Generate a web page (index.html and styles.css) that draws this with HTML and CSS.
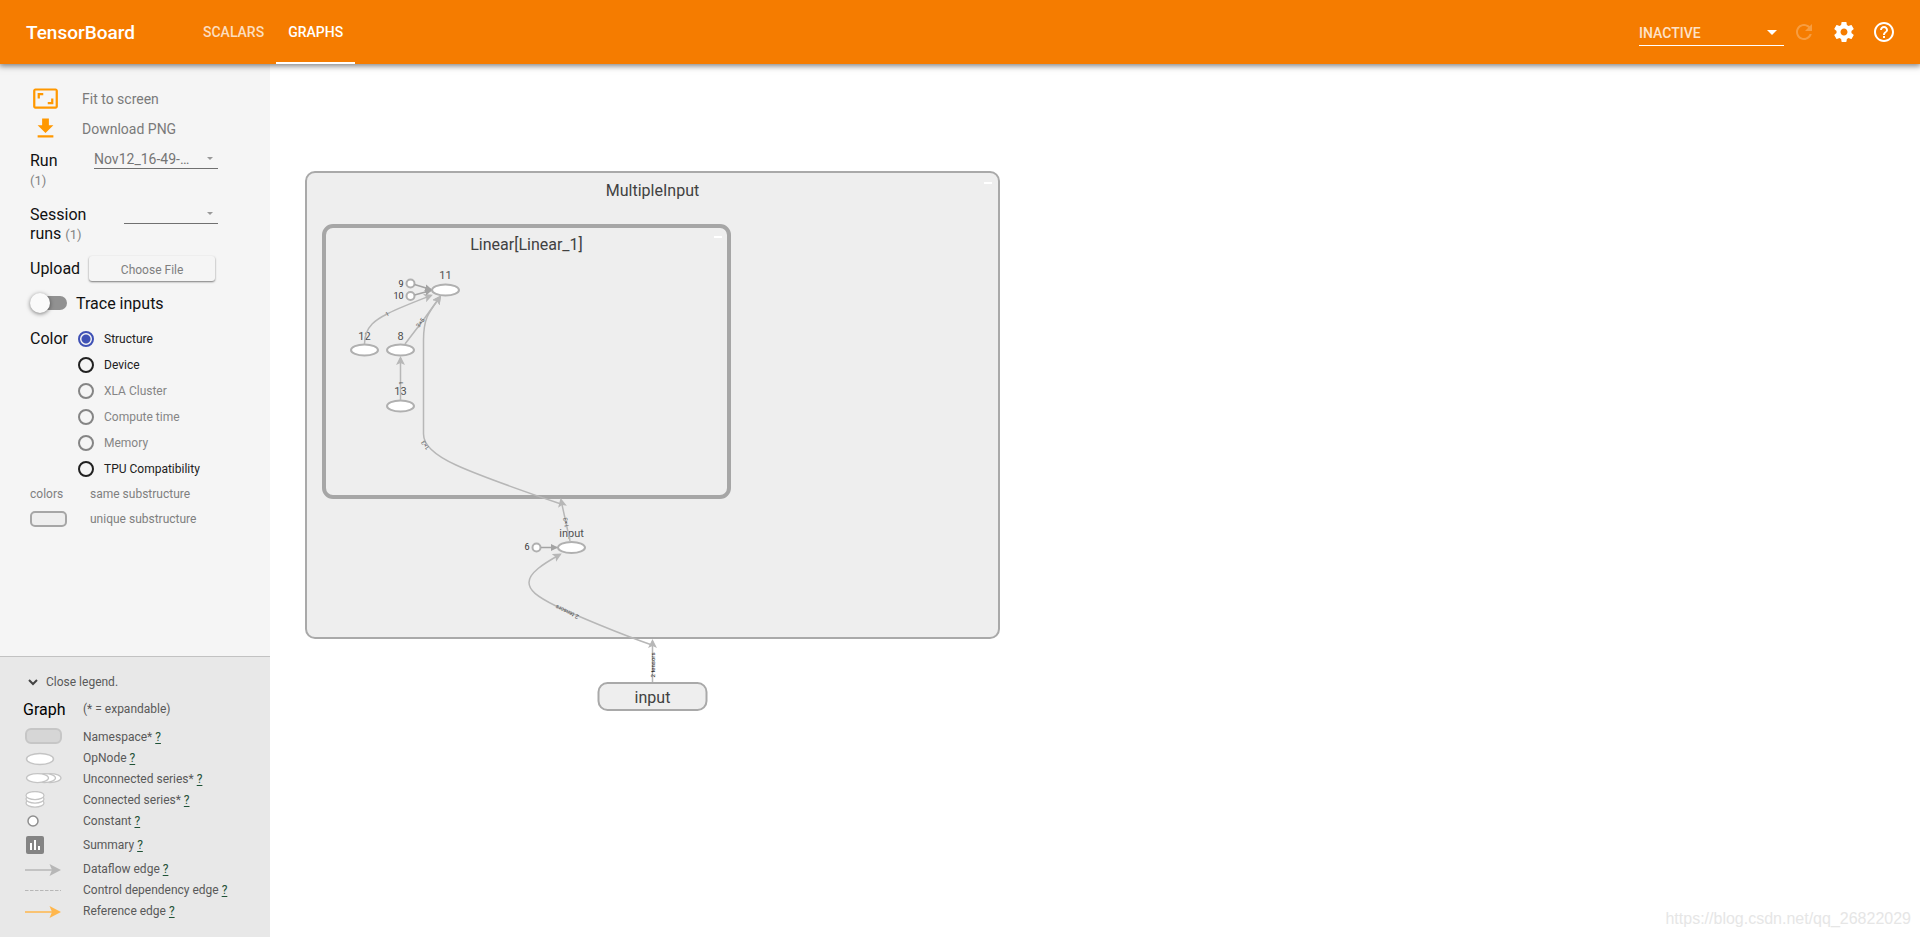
FILE: index.html
```html
<!DOCTYPE html>
<html lang="en">
<head>
<meta charset="utf-8">
<title>TensorBoard</title>
<link rel="stylesheet" href="styles.css">
</head>
<body>
<header class="toolbar">
  <div class="brand">TensorBoard</div>
  <nav class="tabs">
    <button class="tab" type="button">SCALARS</button>
    <button class="tab tab-active" type="button">GRAPHS</button>
  </nav>
  <div class="tools">
    <div class="picker picker-light">
      <select class="picker-select" aria-label="Plugin"><option>INACTIVE</option></select>
      <svg class="caret" viewBox="0 0 10 5" aria-hidden="true"><path d="M0 0h10L5 5z"/></svg>
    </div>
    <button class="icon-button icon-disabled" type="button" aria-label="Reload" disabled>
      <svg viewBox="0 0 24 24"><path d="M17.65 6.35C16.2 4.9 14.21 4 12 4c-4.42 0-7.99 3.58-7.99 8s3.57 8 7.99 8c3.73 0 6.84-2.55 7.73-6h-2.08c-.82 2.33-3.04 4-5.65 4-3.31 0-6-2.69-6-6s2.69-6 6-6c1.66 0 3.14.69 4.22 1.78L13 11h7V4l-2.35 2.35z"/></svg>
    </button>
    <button class="icon-button" type="button" aria-label="Settings">
      <svg viewBox="0 0 24 24"><path d="M19.43 12.98c.04-.32.07-.64.07-.98s-.03-.66-.07-.98l2.11-1.65c.19-.15.24-.42.12-.64l-2-3.46c-.12-.22-.39-.3-.61-.22l-2.49 1c-.52-.4-1.08-.73-1.69-.98l-.38-2.65C14.46 2.18 14.25 2 14 2h-4c-.25 0-.46.18-.49.42l-.38 2.65c-.61.25-1.17.59-1.69.98l-2.49-1c-.23-.09-.49 0-.61.22l-2 3.46c-.13.22-.07.49.12.64l2.11 1.65c-.04.32-.07.65-.07.98s.03.66.07.98l-2.11 1.65c-.19.15-.24.42-.12.64l2 3.46c.12.22.39.3.61.22l2.49-1c.52.4 1.08.73 1.69.98l.38 2.65c.03.24.24.42.49.42h4c.25 0 .46-.18.49-.42l.38-2.65c.61-.25 1.17-.59 1.69-.98l2.49 1c.23.09.49 0 .61-.22l2-3.46c.12-.22.07-.49-.12-.64l-2.11-1.65zM12 15.5c-1.93 0-3.5-1.57-3.5-3.5s1.57-3.5 3.5-3.5 3.5 1.57 3.5 3.5-1.57 3.5-3.5 3.5z"/></svg>
    </button>
    <button class="icon-button" type="button" aria-label="Help">
      <svg viewBox="0 0 24 24"><path d="M11 18h2v-2h-2v2zm1-16C6.48 2 2 6.48 2 12s4.48 10 10 10 10-4.48 10-10S17.52 2 12 2zm0 18c-4.41 0-8-3.59-8-8s3.59-8 8-8 8 3.59 8 8-3.59 8-8 8zm0-14c-2.21 0-4 1.79-4 4h2c0-1.100.9-2 2-2s2 .9 2 2c0 2-3 1.750-3 5h2c0-2.250 3-2.500 3-5 0-2.210-1.790-4-4-4z"/></svg>
    </button>
  </div>
</header>

<div class="workspace">
  <aside class="sidebar">
    <section class="controls">
      <button class="action" type="button">
        <svg class="action-icon" viewBox="0 0 24 24"><path d="M19 12h-2v3h-3v2h5v-5zM7 9h3V7H5v5h2V9zm14-6H3c-1.100 0-2 .9-2 2v14c0 1.100.9 2 2 2h18c1.100 0 2-.9 2-2V5c0-1.100-.9-2-2-2zm0 16.010H3V4.990h18v14.020z"/></svg>
        <span>Fit to screen</span>
      </button>
      <button class="action" type="button">
        <svg class="action-icon" viewBox="0 0 24 24"><path d="M19 9h-4V3H9v6H5l7 7 7-7zM5 18v2h14v-2H5z"/></svg>
        <span>Download PNG</span>
      </button>

      <div class="field field-run">
        <label class="field-label" for="run">Run <span class="count">(1)</span></label>
        <div class="picker picker-run">
          <select class="picker-select" id="run"><option>Nov12_16-49-…</option></select>
          <svg class="caret" viewBox="0 0 10 5" aria-hidden="true"><path d="M0 0h10L5 5z"/></svg>
        </div>
      </div>
      <div class="field field-session">
        <label class="field-label" for="session"><span class="line">Session</span><span class="line">runs <span class="count">(1)</span></span></label>
        <div class="picker picker-session">
          <select class="picker-select" id="session"><option></option></select>
          <svg class="caret" viewBox="0 0 10 5" aria-hidden="true"><path d="M0 0h10L5 5z"/></svg>
        </div>
      </div>
      <div class="upload">
        <span class="upload-label" id="upload-label">Upload</span>
        <button class="file-button" type="button">Choose File</button>
      </div>
      <label class="trace"><input class="switch" type="checkbox"><span>Trace inputs</span></label>

      <div class="color">
        <span class="color-label" id="color-label">Color</span>
        <div class="radios" role="radiogroup" aria-labelledby="color-label">
          <label class="radio"><input type="radio" name="color" checked><span>Structure</span></label>
          <label class="radio"><input type="radio" name="color"><span>Device</span></label>
          <label class="radio radio-off"><input type="radio" name="color" disabled><span>XLA Cluster</span></label>
          <label class="radio radio-off"><input type="radio" name="color" disabled><span>Compute time</span></label>
          <label class="radio radio-off"><input type="radio" name="color" disabled><span>Memory</span></label>
          <label class="radio"><input type="radio" name="color"><span>TPU Compatibility</span></label>
        </div>
      </div>
      <div class="swatches">
        <span>colors</span><span>same substructure</span>
        <span class="swatch"></span><span>unique substructure</span>
      </div>
    </section>

    <section class="legend">
      <button class="legend-toggle" type="button">
        <svg viewBox="0 0 10 7" aria-hidden="true"><path d="M1 1l4 4 4-4" fill="none" stroke="#444" stroke-width="2"/></svg>
        <span>Close legend.</span>
      </button>
      <div class="legend-head"><span class="legend-title">Graph</span><span>(* = expandable)</span></div>
      <ul class="legend-list">
        <li><svg viewBox="0 0 40 18"><rect x="3" y="1" width="35" height="14" rx="5" fill="#d6d6d6" stroke="#c6c6c6" stroke-width="2"/></svg><span>Namespace* <a href="#namespace">?</a></span></li>
        <li><svg viewBox="0 0 40 18"><ellipse cx="17" cy="10" rx="13.500" ry="5.500" fill="#fff" stroke="#c4c4c4" stroke-width="1.500"/></svg><span>OpNode <a href="#opnode">?</a></span></li>
        <li><svg viewBox="0 0 40 18"><g fill="#fff" stroke="#c4c4c4" stroke-width="1.250"><ellipse cx="27" cy="8" rx="11" ry="4.500"/><ellipse cx="21.500" cy="8" rx="11" ry="4.500"/><ellipse cx="14.500" cy="8" rx="11" ry="4.500"/></g></svg><span>Unconnected series* <a href="#unconnected">?</a></span></li>
        <li><svg viewBox="0 0 40 18"><g fill="#fff" stroke="#c4c4c4" stroke-width="1.250"><ellipse cx="12" cy="12" rx="9" ry="4"/><ellipse cx="12" cy="8" rx="9" ry="4"/><ellipse cx="12" cy="4.500" rx="9" ry="4"/></g></svg><span>Connected series* <a href="#connected">?</a></span></li>
        <li><svg viewBox="0 0 40 18"><circle cx="10" cy="9" r="5" fill="#fff" stroke="#8f8f8f" stroke-width="1.500"/></svg><span>Constant <a href="#constant">?</a></span></li>
        <li class="legend-summary"><svg viewBox="0 0 40 18"><rect x="3" y="0" width="18" height="18" rx="2" fill="#848484"/><path d="M7 7h2v7H7zM11 4h2v10h-2zM15 10h2v4h-2z" fill="#fff"/></svg><span>Summary <a href="#summary">?</a></span></li>
        <li><svg viewBox="0 0 40 18"><path d="M2 10h27" stroke="#b7b7b7" stroke-width="1.500"/><path d="M26.500 4L38 10l-11.500 6L29 10z" fill="#b7b7b7"/></svg><span>Dataflow edge <a href="#dataflow">?</a></span></li>
        <li><svg viewBox="0 0 40 18"><path d="M2 9.500h36" stroke="#b7b7b7" stroke-dasharray="3.500 1.500"/></svg><span>Control dependency edge <a href="#control">?</a></span></li>
        <li><svg viewBox="0 0 40 18"><path d="M2 10h27" stroke="#ffb74d" stroke-width="1.500"/><path d="M26.500 4L38 10l-11.500 6L29 10z" fill="#ffb74d"/></svg><span>Reference edge <a href="#reference">?</a></span></li>
      </ul>
    </section>
  </aside>

  <main class="canvas">
    <svg class="graph" viewBox="270 64 1650 873" preserveAspectRatio="xMinYMin meet" role="img" aria-label="Model graph">
      <defs>
        <marker id="arrow" markerUnits="userSpaceOnUse" markerWidth="9" markerHeight="9" refX="7" refY="4.500" orient="auto"><path d="M0 0L9 4.500 0 9 2 4.500z" fill="#b7b7b7"/></marker>
        <marker id="arrow-const" markerUnits="userSpaceOnUse" markerWidth="7" markerHeight="7" refX="6" refY="3.500" orient="auto"><path d="M0 0L7 3.500 0 7z" fill="#a3a3a3"/></marker>
      </defs>
      <rect class="box" x="306" y="172" width="693" height="466" rx="9"/>
      <rect class="box box-thick" x="324" y="226" width="405" height="271" rx="9"/>
      <rect class="box" x="598.500" y="683" width="108" height="27" rx="9"/>
      <path d="M984 183h8M714 237h8" stroke="#fff" stroke-width="2"/>
      <g class="title">
        <text x="652.500" y="196">MultipleInput</text>
        <text x="526.500" y="250">Linear[Linear_1]</text>
        <text x="652.500" y="703">input</text>
      </g>
      <g class="node">
        <ellipse cx="445.500" cy="290" rx="13.500" ry="5.500"/>
        <ellipse cx="364.500" cy="350" rx="13.500" ry="5.500"/>
        <ellipse cx="400.500" cy="350" rx="13.500" ry="5.500"/>
        <ellipse cx="400.500" cy="406" rx="13.500" ry="5.500"/>
        <ellipse cx="571.500" cy="547.500" rx="13.500" ry="5.500"/>
        <circle cx="410.500" cy="283.500" r="4"/>
        <circle cx="410.500" cy="296" r="4"/>
        <circle cx="536.500" cy="547.500" r="4"/>
      </g>
      <g class="node-name">
        <text x="445.500" y="279">11</text>
        <text x="364.500" y="340">12</text>
        <text x="400.500" y="340">8</text>
        <text x="400.500" y="395">13</text>
        <text x="571.500" y="537">input</text>
      </g>
      <g class="const-name">
        <text x="403.500" y="287">9</text>
        <text x="403.500" y="299">10</text>
        <text x="529.500" y="550">6</text>
      </g>
      <g class="edge">
        <path d="M364.500 344C364.500 326 377 319 388 313.500C401 307 417 301 431 295.500"/>
        <path d="M405 344C416 330 428 314 440 297"/>
        <path d="M400.500 400V358"/>
        <path d="M561 504C520 490 482 477 456 465C434 455 423.500 445 423.500 434V340C423.500 318 429 312 440 297"/>
        <path d="M570 541L561 500"/>
        <path d="M652 645C620 634 575 615 556 606C536 596 529 590 529 582.500C529 573 543 564 560 554.500"/>
        <path d="M652.500 682V641"/>
      </g>
      <g class="edge-const">
        <path d="M414.500 284.500L431 289.500"/>
        <path d="M414.500 295L431 290.500"/>
        <path d="M541 547.500H557"/>
      </g>
      <g class="edge-name">
        <text transform="translate(388 316) rotate(-25)">1</text>
        <text transform="translate(422 324) rotate(-54)">3×5</text>
        <text transform="translate(402.500 383) rotate(-90)">1</text>
        <text transform="translate(427 444) rotate(-125)">1×3</text>
        <text transform="translate(568 522) rotate(-101)">1×3</text>
        <text transform="translate(568 610) rotate(-154)">2 tensors</text>
        <text class="edge-name-dark" transform="translate(655 665) rotate(-90)">2 tensors</text>
      </g>
    </svg>
    <span class="watermark">https://blog.csdn.net/qq_26822029</span>
  </main>
</div>
</body>
</html>
```
FILE: styles.css
```css
* { box-sizing: border-box; }

body {
  margin: 0;
  min-height: 100vh;
  display: flex;
  flex-direction: column;
  font-family: Roboto, "Liberation Sans", sans-serif;
  font-size: 12px;
  background: #fff;
}

button, select, input { font: inherit; margin: 0; }
button { border: 0; padding: 0; background: none; cursor: pointer; }

/* Top toolbar */
.toolbar {
  display: flex;
  align-items: stretch;
  height: 64px;
  padding: 0 24px 0 26px;
  background: #f57c00;
  color: #fff;
  box-shadow: 0 1px 6px 1px rgba(0, 0, 0, 0.5);
  position: relative;
  z-index: 1;
}
.brand { width: 165px; font-size: 19px; line-height: 65px; font-weight: 500; }
.tabs { display: flex; }
.tab {
  padding: 0 12px;
  font-size: 14px;
  font-weight: 500;
  color: rgba(255, 255, 255, 0.75);
  border-top: 2px solid transparent;
  border-bottom: 2px solid transparent;
}
.tab-active { color: #fff; border-bottom-color: #fff; }
.tools { display: flex; align-items: center; gap: 16px; margin-left: auto; }
.icon-button { display: flex; width: 24px; height: 24px; }
.icon-button svg { width: 24px; height: 24px; fill: #fff; }
.icon-disabled { opacity: 0.25; }

/* Drop-downs */
.picker { display: grid; align-items: center; border-bottom: 1px solid #707070; }
.picker > * { grid-area: 1 / 1; }
.picker-select {
  width: 100%;
  height: 20px;
  padding: 0;
  border: 0;
  border-radius: 0;
  appearance: none;
  background: none;
  font-size: 14px;
  color: #757575;
}
.caret { justify-self: end; width: 6px; height: 3px; margin-right: 5px; fill: #999; pointer-events: none; }
.picker-light { width: 145px; margin-right: -8px; padding: 4px 0 2px; border-color: #fff; }
.picker-light .picker-select { font-weight: 500; color: rgba(255, 255, 255, 0.8); }
.picker-light .caret { width: 10px; height: 5px; margin-right: 7px; fill: #fff; }

.workspace { flex: 1; display: flex; }

/* Sidebar */
.sidebar { flex: none; width: 270px; display: flex; flex-direction: column; background: #f5f5f5; }
.controls { flex: 1; padding: 19px 52px 16px 30px; color: #7f7f7f; }
.action {
  display: flex;
  align-items: center;
  gap: 23px;
  height: 30px;
  padding-left: 2px;
  font-size: 14px;
  color: #7a7a7a;
}
.action span { padding-top: 2px; }
.action-icon { width: 27px; height: 27px; fill: #ff9800; }
.field { display: flex; justify-content: space-between; align-items: flex-start; }
.field-label, .upload-label, .color-label { font-size: 16px; line-height: 19px; color: #111; }
.line { display: block; }
.count { font-size: 13px; color: #848484; }
.field-run { margin-top: 8px; }
.field-session { margin-top: 15px; }
.field-run .field-label { width: 40px; }
.field-session .field-label { width: 66px; }
.picker-run { width: 124px; margin-top: -2px; }
.picker-run .picker-select { height: 19px; padding-top: 1px; }
.picker-session { width: 94px; margin-top: -2px; }
.upload { display: flex; align-items: center; gap: 9px; height: 26px; margin-top: 11px; }
.file-button {
  width: 126px;
  height: 25px;
  padding-top: 4px;
  border-radius: 3px;
  color: #7f7f7f;
  background: #f5f5f5;
  box-shadow: 0 1px 2px rgba(0, 0, 0, 0.5);
}
.trace { display: flex; align-items: center; gap: 9px; height: 20px; margin-top: 12px; font-size: 16px; color: #111; }
.switch {
  appearance: none;
  display: flex;
  align-items: center;
  width: 37px;
  height: 14px;
  background: linear-gradient(#919191, #919191) right / 26px 14px no-repeat;
  border-radius: 7px;
}
.switch::before {
  content: "";
  width: 20px;
  height: 20px;
  flex: none;
  border-radius: 50%;
  background: #fafafa;
  box-shadow: 0 1px 4px rgba(0, 0, 0, 0.5);
}
.color { display: flex; gap: 10px; margin-top: 13px; }
.color-label { width: 38px; line-height: 25px; }
.radio { display: flex; align-items: center; gap: 10px; height: 26px; color: #212121; }
.radio input {
  appearance: none;
  width: 16px;
  height: 16px;
  border: 2px solid #212121;
  border-radius: 50%;
}
.radio input:checked { border-color: #3f51b5; background: radial-gradient(circle, #3f51b5 4px, transparent 5px); }
.radio-off { color: #858585; }
.radio-off input { border-color: #858585; }
.swatches { display: grid; grid-template-columns: 60px auto; grid-auto-rows: 25px; align-items: center; margin-top: -1px; }
.swatch { width: 37px; height: 16px; border: 2px solid #a6a6a6; border-radius: 5px; background: #eee; }

/* Legend */
.legend { padding: 15px 23px 16px; border-top: 1px solid #c2c2c2; background: #e8e8e8; color: #595959; }
.legend-toggle { display: flex; align-items: center; gap: 8px; height: 20px; padding-left: 5px; color: #595959; }
.legend-toggle svg { width: 10px; height: 7px; }
.legend-head { display: flex; align-items: center; height: 24px; margin-top: 5px; }
.legend-title { width: 60px; font-size: 16px; color: #000; }
.legend-list { list-style: none; margin: 5px 0 0; padding: 0; }
.legend-list li { display: flex; align-items: center; gap: 20px; height: 21px; }
.legend-list .legend-summary { height: 27px; }
.legend-list svg { width: 40px; height: 18px; }
.legend-list a { color: #1f5236; text-underline-offset: 2px; }

/* Graph canvas */
.canvas { flex: 1; min-width: 0; position: relative; }
.graph { display: block; width: 100%; }
.box { fill: #eee; stroke: #a9a9a9; stroke-width: 2; }
.box-thick { stroke: #a6a6a6; stroke-width: 4; }
.title { font-size: 16px; text-anchor: middle; fill: #414141; }
.node { fill: #fff; stroke: #b0b0b0; stroke-width: 2; }
.node-name { font-size: 11px; text-anchor: middle; fill: #505050; }
.const-name { font-size: 9px; text-anchor: end; fill: #333; }
.edge path { fill: none; stroke: #b7b7b7; stroke-width: 1.500; marker-end: url(#arrow); }
.edge-const path { stroke: #a3a3a3; stroke-width: 1.500; marker-end: url(#arrow-const); }
.edge-name { font-size: 6px; text-anchor: middle; fill: #555; }
.edge-name-dark { fill: #222; }
.watermark {
  position: absolute;
  right: 9px;
  bottom: 9px;
  font-family: "Liberation Sans", Arial, sans-serif;
  font-size: 16px;
  line-height: 18px;
  color: #e6e6e6;
}
```
